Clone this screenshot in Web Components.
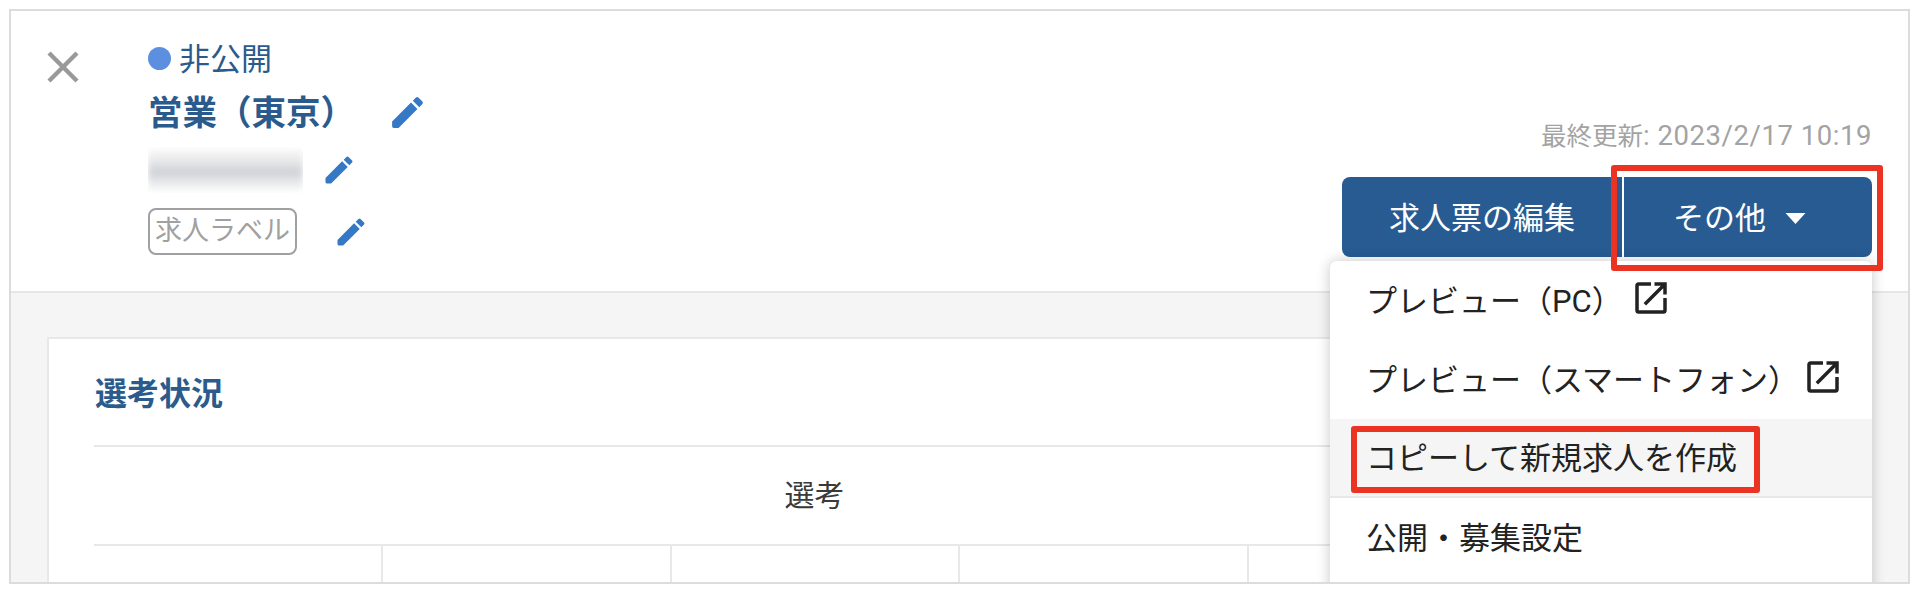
<!DOCTYPE html>
<html lang="ja">
<head>
<meta charset="utf-8">
<title>求人</title>
<style>
  html, body { margin: 0; padding: 0; background: #fff; }
  body { font-family: Roboto, "Noto Sans CJK JP", sans-serif; color: #222; }
</style>
</head>
<body>
<job-frame>
  <job-header slot="header">
    <info-rows slot="info">
      <status-line>非公開</status-line>
      <edit-row size="41" gap="32"><job-title>営業（東京）</job-title></edit-row>
      <edit-row size="36" gap="18"><blur-patch></blur-patch></edit-row>
      <edit-row size="36" gap="36"><job-tag>求人ラベル</job-tag></edit-row>
    </info-rows>
    <job-actions slot="actions"></job-actions>
  </job-header>
  <status-card slot="main"></status-card>
  <more-menu slot="overlay">
    <menu-item external icon-gap="7">プレビュー（PC）</menu-item>
    <menu-item external icon-gap="3">プレビュー（スマートフォン）</menu-item>
    <menu-item active>コピーして新規求人を作成</menu-item>
    <menu-item>公開・募集設定</menu-item>
  </more-menu>
  <red-mark slot="overlay" style="left:1600px;top:154px;width:260px;height:94px"></red-mark>
  <red-mark slot="overlay" style="left:1340px;top:415px;width:397px;height:55px"></red-mark>
</job-frame>

<script>
const PENCIL = 'M3 18v2a1 1 0 0 0 1 1h2.75L17.81 9.94l-3.75-3.75L3 17.25zM20.71 7.04a1 1 0 0 0 0-1.41l-2.34-2.34a1 1 0 0 0-1.41 0l-1.83 1.83 3.75 3.75 1.83-1.83z';
const OPEN_NEW = 'M19 19H5V5h7V3H5a2 2 0 0 0-2 2v14a2 2 0 0 0 2 2h14a2 2 0 0 0 2-2v-7h-2v7zM14 3v2h3.59l-9.83 9.83 1.41 1.41L19 6.41V10h2V3h-7z';

// small helper so every class below stays short
class ShadowBase extends HTMLElement {
  render(html) {
    const template = document.createElement('template');
    template.innerHTML = html;
    this.attachShadow({ mode: 'open' });
    this.shadowRoot.appendChild(template.content.cloneNode(true));
  }
}

class JobFrame extends ShadowBase {
  constructor() {
    super();
    this.render(`
      <style>
        :host { display: block; box-sizing: border-box; position: relative; overflow: hidden;
          margin: 9px 10px 0 9px; height: 575px; border: 2px solid #dcdcdc; background: #f5f5f5; }
      </style>
      <slot name="header"></slot>
      <slot name="main"></slot>
      <slot name="overlay"></slot>
    `);
  }
}

class JobHeader extends ShadowBase {
  constructor() {
    super();
    this.render(`
      <style>
        :host { display: flex; box-sizing: border-box; height: 282px; background: #fff;
          border-bottom: 2px solid #e6e6e6; padding: 32px 36px 34px 36px; }
        svg { flex: none; width: 32px; height: 32px; margin-top: 8px; margin-right: 69px; }
        .end { margin-left: auto; display: flex; }
      </style>
      <svg viewBox="0 0 32 32"><path d="M2 2l28 28M30 2L2 30" stroke="#999" stroke-width="4.4" fill="none"/></svg>
      <slot name="info"></slot>
      <div class="end"><slot name="actions"></slot></div>
    `);
  }
}

class InfoRows extends ShadowBase {
  constructor() {
    super();
    this.render(`
      <style>
        :host { display: grid; grid-template-rows: 34px 40px 46px 47px; row-gap: 15px; align-items: center; justify-items: start; }
      </style>
      <slot></slot>
    `);
  }
}

class StatusLine extends ShadowBase {
  constructor() {
    super();
    this.render(`
      <style>
        :host { display: flex; align-items: center; gap: 8px; font-size: 31px; color: #2b5b8c; line-height: 34px; }
        i { width: 23px; height: 23px; border-radius: 50%; background: #5c8fe0; margin-top: -4px; }
      </style>
      <i></i><slot></slot>
    `);
  }
}

class EditRow extends ShadowBase {
  constructor() {
    super();
    const size = this.getAttribute('size') || 36;
    const gap = this.getAttribute('gap') || 18;
    this.render(`
      <style>
        :host { display: flex; align-items: center; gap: ${gap}px; }
        svg { flex: none; width: ${size}px; height: ${size}px; fill: #3478c6; }
      </style>
      <slot></slot>
      <svg viewBox="0 0 24 24"><path d="${PENCIL}"/></svg>
    `);
  }
}

class JobTitle extends ShadowBase {
  constructor() {
    super();
    this.render(`
      <style>
        :host { display: block; font-size: 34.5px; font-weight: 700; color: #2b5b8c; line-height: 40px; white-space: nowrap; padding-top: 2px; }
      </style>
      <slot></slot>
    `);
  }
}

// stands for the text that is blurred out in the screenshot
class BlurPatch extends ShadowBase {
  constructor() {
    super();
    this.render(`
      <style>
        :host { display: block; width: 155px; height: 46px; overflow: hidden; background: #fff; }
        .haze { margin: 3px 0; height: 40px; background: linear-gradient(#f7f7f8, #e6e7e9 30%, #ced1d6 55%, #e6e7e9 78%, #f7f7f8); filter: blur(3px); }
      </style>
      <div class="haze"></div>
    `);
  }
}

class JobTag extends ShadowBase {
  constructor() {
    super();
    this.render(`
      <style>
        :host { display: block; box-sizing: border-box; width: 149px; height: 47px; border: 2px solid #a0a0a0; border-radius: 8px;
          font-size: 27px; line-height: 43px; color: #a0a0a0; text-align: center; white-space: nowrap; }
      </style>
      <slot></slot>
    `);
  }
}

class JobActions extends ShadowBase {
  constructor() {
    super();
    this.render(`
      <style>
        :host { display: flex; flex-direction: column; align-items: flex-end; }
        .stamp { font-size: 25.5px; line-height: 34px; color: #a3a3a3; margin-top: 76px; margin-bottom: 24px; white-space: nowrap; }
        .stamp span { font-size: 27.5px; letter-spacing: .55px; }
        .group { display: flex; height: 80px; font-size: 31px; color: #fff; }
        .group div { display: flex; align-items: center; justify-content: center; background: #275b92; white-space: nowrap; padding-bottom: 3px; box-sizing: border-box; }
        .edit { width: 282px; border-radius: 8px 0 0 8px; border-right: 2px solid #fff; }
        .more { width: 248px; border-radius: 0 8px 8px 0; gap: 18px; padding-right: 16px; }
        svg { width: 23px; height: 11px; margin-top: 5px; }
      </style>
      <div class="stamp">最終更新<span>: 2023/2/17 10:19</span></div>
      <div class="group">
        <div class="edit">求人票の編集</div>
        <div class="more">その他<svg viewBox="0 0 22 11"><path d="M1 0h20L11 11z" fill="#fff"/></svg></div>
      </div>
    `);
  }
}

class StatusCard extends ShadowBase {
  constructor() {
    super();
    const cells = '<div class="cell"></div>'.repeat(5);
    this.render(`
      <style>
        :host { display: block; box-sizing: border-box; margin: 44px 36px 0 36px; height: 300px; overflow: hidden;
          background: #fff; border: 2px solid #e8e8e8; border-bottom: none; padding: 0 45px; }
        h2 { margin: 0; height: 106px; display: flex; align-items: center; font-size: 32px; font-weight: 700; color: #2b5b8c; padding-bottom: 2px; box-sizing: border-box; margin-left: 1px; }
        .table { width: 1444px; display: grid; grid-template-columns: repeat(5, 1fr); border-top: 2px solid #e8e8e8; }
        .head { grid-column: 1 / -1; height: 99px; display: flex; align-items: center; justify-content: center; box-sizing: border-box;
          font-size: 30px; color: #3a3a3a; border-bottom: 2px solid #e8e8e8; padding: 0 3px 6px 0; }
        .cell { height: 100px; border-right: 2px solid #e8e8e8; }
      </style>
      <h2>選考状況</h2>
      <div class="table">
        <div class="head">選考</div>
        ${cells}
      </div>
    `);
  }
}

class MoreMenu extends ShadowBase {
  constructor() {
    super();
    this.render(`
      <style>
        :host { position: absolute; left: 1319px; top: 250px; width: 542px; height: 360px; background: #fff;
          border-radius: 7px; box-shadow: 0 0 14px rgba(0,0,0,.22); }
      </style>
      <slot></slot>
    `);
  }
}

class MenuItem extends ShadowBase {
  constructor() {
    super();
    const icon = this.hasAttribute('external')
      ? `<svg viewBox="0 0 24 24"><path d="${OPEN_NEW}"/></svg>` : '';
    const iconGap = this.getAttribute('icon-gap') || 0;
    this.render(`
      <style>
        :host { display: flex; align-items: center; box-sizing: border-box; height: 79px; padding: 0 0 5px 36px;
          font-size: 31px; color: #222; white-space: nowrap; }
        :host([active]) { background: #f5f5f5; border-bottom: 2px solid #e8e8e8; }
        svg { flex: none; width: 42px; height: 42px; fill: #222; margin-left: ${iconGap}px; }
      </style>
      <slot></slot>${icon}
    `);
  }
}

class RedMark extends ShadowBase {
  constructor() {
    super();
    this.render(`
      <style>
        :host { position: absolute; display: block; border: 6px solid #ea3323; border-radius: 3px; }
      </style>
    `);
  }
}

customElements.define('job-frame', JobFrame);
customElements.define('job-header', JobHeader);
customElements.define('info-rows', InfoRows);
customElements.define('status-line', StatusLine);
customElements.define('edit-row', EditRow);
customElements.define('job-title', JobTitle);
customElements.define('blur-patch', BlurPatch);
customElements.define('job-tag', JobTag);
customElements.define('job-actions', JobActions);
customElements.define('status-card', StatusCard);
customElements.define('more-menu', MoreMenu);
customElements.define('menu-item', MenuItem);
customElements.define('red-mark', RedMark);
</script>
</body>
</html>
